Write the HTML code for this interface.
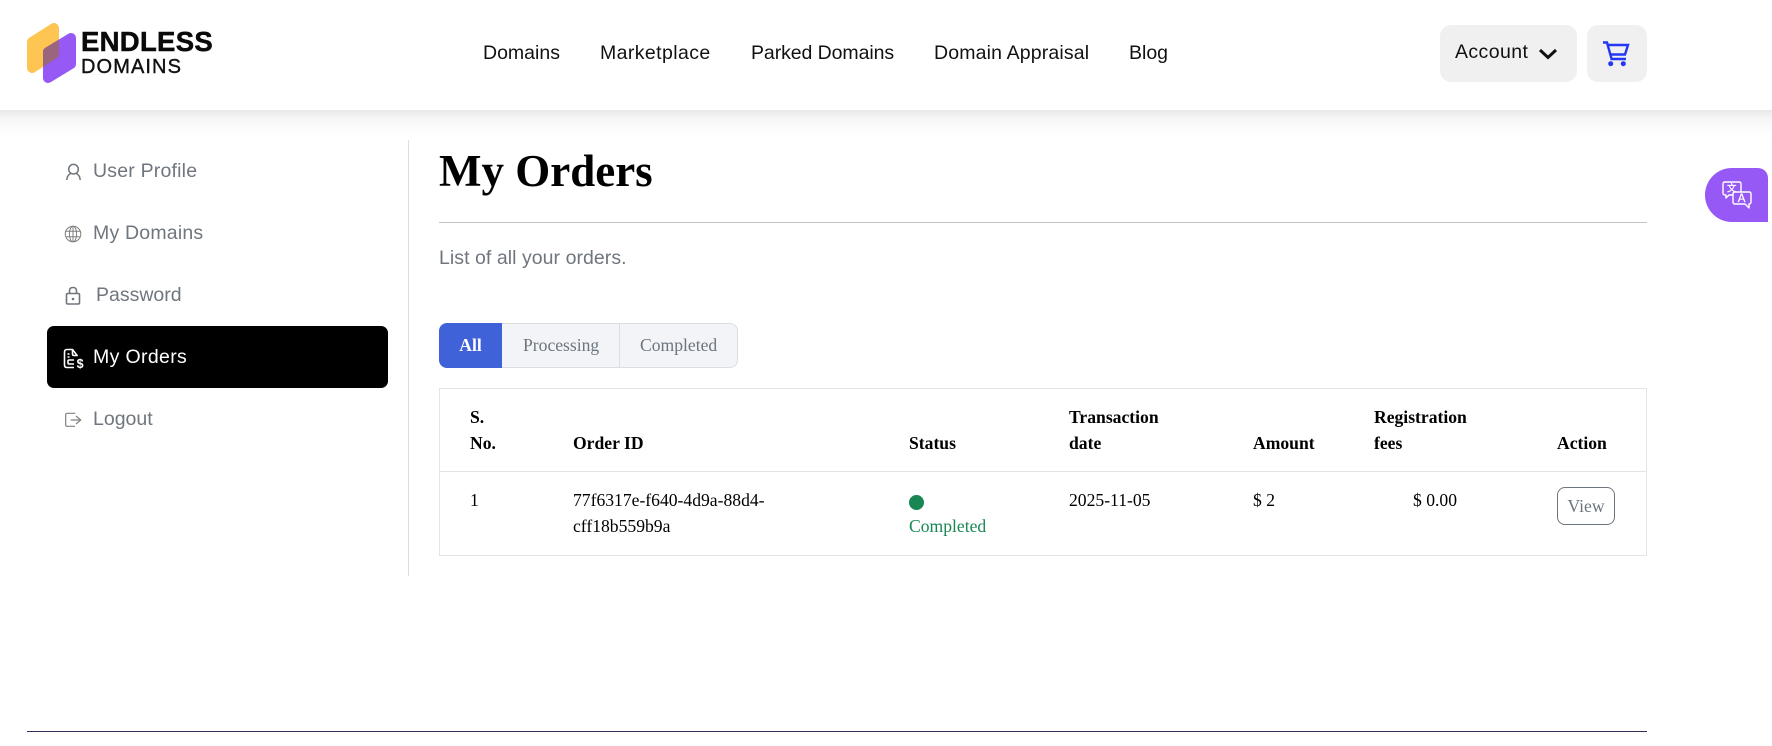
<!DOCTYPE html>
<html lang="en">
<head>
<meta charset="utf-8">
<title>My Orders</title>
<style>
html,body{margin:0;padding:0;background:#fff}
body{width:1772px;height:746px;position:relative;overflow:hidden;font-family:"Liberation Serif",serif;font-size:17.6px;color:#000}
.a{position:absolute;white-space:nowrap}
.s{font-family:"Liberation Sans",sans-serif}
.shadow{left:0;top:110px;width:1772px;height:28px;background:linear-gradient(#e8e8e8,#f6f6f6 30%,#fcfcfc 70%,#fff)}
.nav{top:41px;font-size:19.5px;line-height:24px;color:#111;font-family:"Liberation Sans",sans-serif}
.side{left:93px;font-size:19.5px;line-height:24px;color:#6f767d;font-family:"Liberation Sans",sans-serif}
.th{font-weight:bold;line-height:26px;font-size:17.6px;color:#000}
.td{line-height:26px;font-size:17.6px;color:#000}
svg{position:absolute;overflow:visible}
</style>
</head>
<body>
<!-- header -->
<div class="a shadow"></div>
<svg style="left:0;top:0" width="90" height="90" viewBox="0 0 90 90">
<defs><mask id="pm" maskUnits="userSpaceOnUse" x="0" y="0" width="90" height="90"><path d="M48 52 L71 38 V64 L48 78 Z" fill="#fff" stroke="#fff" stroke-width="10" stroke-linejoin="round"/></mask></defs>
<path d="M32 42 L54 28 V54 L32 68 Z" fill="#fec553" stroke="#fec553" stroke-width="10" stroke-linejoin="round"/>
<path d="M48 52 L71 38 V64 L48 78 Z" fill="#9659f5" stroke="#9659f5" stroke-width="10" stroke-linejoin="round"/>
<path d="M32 42 L54 28 V54 L32 68 Z" fill="#99667e" stroke="#99667e" stroke-width="10" stroke-linejoin="round" mask="url(#pm)"/>
</svg>
<div class="a s" style="left:81px;top:26px;font-size:27.5px;line-height:32px;font-weight:bold;color:#0a0a0a;letter-spacing:.3px;-webkit-text-stroke:.5px #0a0a0a">ENDLESS</div>
<div class="a s" style="left:81px;top:55px;font-size:20px;line-height:24px;color:#111;letter-spacing:1.1px;-webkit-text-stroke:.4px #111">DOMAINS</div>

<div class="a nav" style="left:483px">Domains</div>
<div class="a nav" style="left:600px;letter-spacing:.4px">Marketplace</div>
<div class="a nav" style="left:751px;letter-spacing:-.08px">Parked Domains</div>
<div class="a nav" style="left:934px;letter-spacing:.15px">Domain Appraisal</div>
<div class="a nav" style="left:1129px">Blog</div>

<div class="a" style="left:1440px;top:25px;width:137px;height:57px;background:#f0f0f0;border-radius:11px"></div>
<div class="a s" style="left:1455px;top:40px;font-size:19.5px;line-height:24px;color:#111;letter-spacing:.4px">Account</div>
<svg style="left:1539px;top:48px" width="20" height="14" viewBox="0 0 20 14"><path d="M1 2 L9 9.5 L17 2" fill="none" stroke="#111" stroke-width="3"/></svg>
<div class="a" style="left:1587px;top:25px;width:60px;height:57px;background:#f0f0f0;border-radius:11px"></div>
<svg style="left:1600px;top:30px" width="40" height="45" viewBox="0 0 40 45">
<path d="M3 12.5 H7 L11.6 29 H26" fill="none" stroke="#2337f5" stroke-width="2.4"/>
<path d="M8 15 H28 L25 24.5 H10" fill="none" stroke="#2337f5" stroke-width="2.4"/>
<circle cx="10.7" cy="33.7" r="2.5" fill="#2337f5"/><circle cx="23.3" cy="33.7" r="2.5" fill="#2337f5"/>
</svg>

<!-- translate widget -->
<div class="a" style="left:1705px;top:168px;width:63px;height:54px;background:#9659f5;border-radius:27px 10px 0 27px"></div>
<svg style="left:1720px;top:178px" width="36" height="36" viewBox="0 0 36 36" fill="none" stroke="#fff" stroke-width="1.4" stroke-linejoin="round">
<path d="M5 4 H19 Q21 4 21 6 V16 Q21 17 19 17 H9 L6 20 V17 H5 Q3 17 3 15 V6 Q3 4 5 4 Z"/>
<path d="M15 14 H29 Q31 14 31 16 V24 Q31 26 29 26 V30 L25 26 H15 Q13 26 13 24 V16 Q13 14 15 14 Z" fill="#9659f5"/>
<text x="7" y="13.5" font-size="9.5" fill="#fff" stroke="#fff" stroke-width=".3" font-family="Noto Sans CJK SC, sans-serif">文</text>
<text x="17.8" y="24.2" font-size="11.5" fill="#fff" stroke="#fff" stroke-width=".3" font-family="Liberation Sans, sans-serif">A</text>
</svg>

<!-- sidebar -->
<div class="a" style="left:408px;top:140px;width:1px;height:436px;background:#dedede"></div>
<div class="a" style="left:47px;top:326px;width:341px;height:62px;background:#000;border-radius:7px"></div>

<svg style="left:64px;top:161px" width="18" height="20" viewBox="0 0 18 20" fill="none" stroke="#6f767d" stroke-width="1.5"><circle cx="9.5" cy="8.2" r="4.8"/><path d="M2.8 19 Q3 14.5 6.5 12.5 M16.2 19 Q16 14.5 12.5 12.5"/></svg>
<div class="a side" style="top:159px;letter-spacing:.2px">User Profile</div>

<svg style="left:64px;top:225px" width="18" height="18" viewBox="0 0 18 18" fill="none" stroke="#808080" stroke-width="1"><circle cx="9" cy="9" r="7.8"/><ellipse cx="9" cy="9" rx="3.6" ry="7.8"/><path d="M1.6 6.2 H16.4 M1.6 11.8 H16.4 M9 1 V17"/></svg>
<div class="a side" style="top:221px;letter-spacing:.2px">My Domains</div>

<svg style="left:64px;top:286px" width="18" height="20" viewBox="0 0 18 20" fill="none" stroke="#6f767d" stroke-width="1.6"><rect x="2.5" y="7.5" width="13" height="10.5" rx="1.2"/><path d="M5.5 7.5 V5 Q5.5 1.5 9 1.5 Q12.5 1.5 12.5 5 V7.5"/><circle cx="9" cy="13" r="1.3" fill="#6f767d" stroke="none"/></svg>
<div class="a side" style="left:96px;top:283px">Password</div>

<svg style="left:63px;top:348px" width="21" height="21" viewBox="0 0 21 21" fill="none" stroke="#fff" stroke-width="1.6" stroke-linejoin="round"><path d="M14.5 8 L9.5 1.5 H4 Q1.5 1.5 1.5 4 V17 Q1.5 19.5 4 19.5 H11"/><path d="M9.5 1.5 V6 Q9.5 7.5 11 7.5 H14.5"/><path d="M4.5 6 H6.5 M4.5 9 H6.5 M11 12 H6 Q5 12 5 13 V15 Q5 16 6 16 H11"/><text x="13.6" y="20" font-size="12.5" font-weight="bold" fill="#fff" stroke="none" font-family="Liberation Sans, sans-serif">$</text></svg>
<div class="a side" style="top:345px;color:#fff;letter-spacing:.35px">My Orders</div>

<svg style="left:64px;top:412px" width="18" height="16" viewBox="0 0 18 16" fill="none" stroke="#808080" stroke-width="1.2"><path d="M11.3 1.3 H3.2 Q1.7 1.3 1.7 3 V13 Q1.7 14.3 3.2 14.3 H11"/><path d="M6.7 8 H16.7 M12 4 L16.7 8 L12 12"/></svg>
<div class="a side" style="top:407px">Logout</div>

<!-- main -->
<div class="a" style="left:439px;top:145px;font-size:45px;line-height:52px;font-weight:bold;color:#000">My Orders</div>
<div class="a" style="left:439px;top:222px;width:1208px;height:1px;background:#c4c4c4"></div>
<div class="a s" style="left:439px;top:246px;font-size:19.5px;line-height:24px;color:#6f767d;letter-spacing:.05px">List of all your orders.</div>

<!-- tabs -->
<div class="a" style="left:439px;top:323px;width:299px;height:45px;box-sizing:border-box;background:#f3f4f8;border:1px solid #dcdde3;border-radius:8px"></div>
<div class="a" style="left:439px;top:323px;width:63px;height:45px;background:#3f62d9;border-radius:8px 0 0 8px"></div>
<div class="a" style="left:619px;top:324px;width:1px;height:43px;background:#dcdde3"></div>
<div class="a" style="left:439px;top:323px;width:63px;text-align:center;line-height:44px;color:#fff;font-weight:bold">All</div>
<div class="a" style="left:523px;top:323px;line-height:44px;color:#6c757d">Processing</div>
<div class="a" style="left:640px;top:323px;line-height:44px;color:#6c757d">Completed</div>

<!-- table -->
<div class="a" style="left:439px;top:388px;width:1208px;height:168px;box-sizing:border-box;border:1px solid #e3e4e6"></div>
<div class="a" style="left:439px;top:471px;width:1208px;height:1px;background:#e3e4e6"></div>

<div class="a th" style="left:470px;top:404px">S.<br>No.</div>
<div class="a th" style="left:573px;top:430px">Order ID</div>
<div class="a th" style="left:909px;top:430px">Status</div>
<div class="a th" style="left:1069px;top:404px">Transaction<br>date</div>
<div class="a th" style="left:1253px;top:430px">Amount</div>
<div class="a th" style="left:1374px;top:404px">Registration<br>fees</div>
<div class="a th" style="left:1557px;top:430px">Action</div>

<div class="a td" style="left:470px;top:487px">1</div>
<div class="a td" style="left:573px;top:487px">77f6317e-f640-4d9a-88d4-<br>cff18b559b9a</div>
<div class="a" style="left:909px;top:495px;width:15px;height:15px;border-radius:50%;background:#198754"></div>
<div class="a td" style="left:909px;top:513px;color:#198754">Completed</div>
<div class="a td" style="left:1069px;top:487px">2025-11-05</div>
<div class="a td" style="left:1253px;top:487px">$ 2</div>
<div class="a td" style="left:1413px;top:487px">$ 0.00</div>
<div class="a" style="left:1557px;top:487px;width:58px;height:38px;box-sizing:border-box;border:1px solid #6c757d;border-radius:8px;text-align:center;line-height:37px;color:#6c757d">View</div>

<!-- footer line -->
<div class="a" style="left:27px;top:731px;width:1620px;height:1px;background:#332f55"></div>
</body>
</html>
